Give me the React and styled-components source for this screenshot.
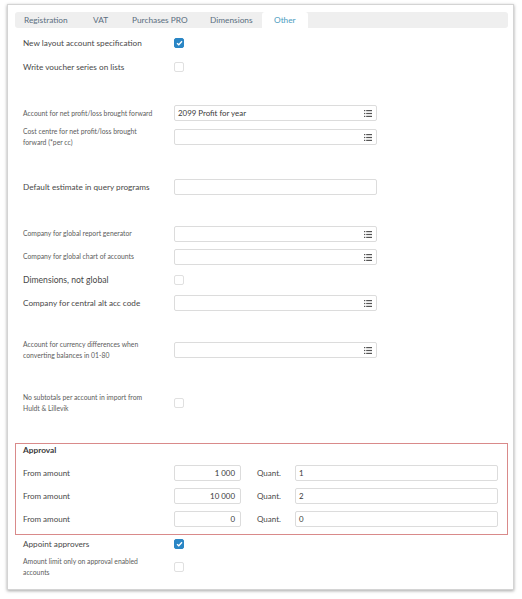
import React from "react";
import styled, { createGlobalStyle } from "styled-components";

const Global = createGlobalStyle`
  html, body { margin: 0; padding: 0; background: #ffffff; }
  body { font-family: "Lato", "Noto Sans", sans-serif; }
`;

const Page = styled.div`
  padding: 4px 8px 9px 7px;
`;

const Panel = styled.div`
  width: 507px;
  box-sizing: border-box;
  border: 1px solid #d4d4d4;
  box-shadow: 0 1px 3px rgba(0, 0, 0, 0.35);
  background: #fff;
  padding: 7px 5px 8px 7px;
`;

const TabBar = styled.div`
  display: flex;
  height: 16px;
  width: 493px;
  background: #efefef;
  border-radius: 3px;
  margin-bottom: 3px;
`;

const Tab = styled.div`
  width: ${(p) => p.$w}px;
  box-sizing: border-box;
  padding-left: ${(p) => p.$pl}px;
  font-size: 8.3px;
  line-height: 16px;
  color: ${(p) => (p.$active ? "#4c9cc0" : "#5a6e80")};
  background: ${(p) => (p.$active ? "#ffffff" : "transparent")};
  border-radius: ${(p) => (p.$active ? "3px 3px 0 0" : "0")};
  white-space: nowrap;
`;

const Row = styled.div`
  display: grid;
  grid-template-columns: 151px 1fr;
  align-items: center;
  height: ${(p) => p.$h || 23}px;
  padding-left: 8px;
`;

const Spacer = styled.div`
  height: ${(p) => p.$h}px;
`;

const Label = styled.div`
  font-size: ${(p) => (p.$small ? "6.8px" : p.$big ? "8.6px" : "8.2px")};
  line-height: ${(p) => (p.$small ? "11px" : "10px")};
  color: ${(p) => (p.$small ? "#5c5c5c" : "#484848")};
  padding-right: 18px;
`;

const Field = styled.div`
  position: relative;
  width: ${(p) => p.$w || 203}px;
  height: 16px;
  box-sizing: border-box;
  border: 1px solid #dcdcdc;
  border-radius: 2px;
  background: #fff;
  font-size: 7.9px;
  line-height: 14px;
  color: #3a3a3a;
  padding: 0 5px 0 3px;
  text-align: ${(p) => (p.$right ? "right" : "left")};
`;

const IconWrap = styled.span`
  position: absolute;
  right: 4px;
  top: 4px;
  width: 8px;
  height: 7px;
  display: flex;
`;

const Check = styled.div`
  width: 10px;
  height: 10px;
  box-sizing: border-box;
  border-radius: 2px;
  border: 1px solid ${(p) => (p.$on ? "#2a86c5" : "#e0e0e0")};
  background: ${(p) => (p.$on ? "#2a86c5" : "#fff")};
  display: flex;
  align-items: center;
  justify-content: center;
`;

const ApprovalBox = styled.div`
  width: 493px;
  box-sizing: border-box;
  border: 1px solid #d98a8a;
  padding: 1px 9px 4px 7px;
`;

const ApprovalTitle = styled.div`
  height: 16px;
  font-size: 8.3px;
  font-weight: 700;
  line-height: 10px;
  color: #3a3a3a;
`;

const AmountRow = styled.div`
  display: flex;
  align-items: center;
  height: 23px;
`;

const AmountLabel = styled.div`
  width: 151px;
  font-size: 8px;
  color: #484848;
`;

const QuantLabel = styled.div`
  width: 38px;
  margin-left: 16px;
  font-size: 8px;
  color: #484848;
`;

const ListIcon = () => (
  <IconWrap>
    <svg width="8" height="7" viewBox="0 0 8 7">
      <g fill="#555">
        <rect x="0" y="0" width="1.3" height="1.2" />
        <rect x="0" y="2.9" width="1.3" height="1.2" />
        <rect x="0" y="5.8" width="1.3" height="1.2" />
        <rect x="2.2" y="0" width="5.8" height="1.2" />
        <rect x="2.2" y="2.9" width="5.8" height="1.2" />
        <rect x="2.2" y="5.8" width="5.8" height="1.2" />
      </g>
    </svg>
  </IconWrap>
);

const CheckBox = ({ on }) => (
  <Check $on={on}>
    {on && (
      <svg width="7" height="6" viewBox="0 0 7 6">
        <path d="M1 3.2 L2.8 4.8 L6 1.2" stroke="#fff" strokeWidth="1.3" fill="none" />
      </svg>
    )}
  </Check>
);

const Select = ({ value }) => (
  <Field>
    {value}
    <ListIcon />
  </Field>
);

const tabs = [
  { t: "Registration", w: 66, pl: 9 },
  { t: "VAT", w: 40, pl: 12 },
  { t: "Purchases PRO", w: 78, pl: 11 },
  { t: "Dimensions", w: 63, pl: 11 },
  { t: "Other", w: 46, pl: 12, active: true },
];

const approvals = [
  { a: "1 000", q: "1" },
  { a: "10 000", q: "2" },
  { a: "0", q: "0" },
];

export default function App() {
  return (
    <>
      <Global />
      <Page>
        <Panel>
          <TabBar>
            {tabs.map((t) => (
              <Tab key={t.t} $w={t.w} $pl={t.pl} $active={t.active}>
                {t.t}
              </Tab>
            ))}
          </TabBar>

          <Row $h={24}>
            <Label>New layout account specification</Label>
            <CheckBox on />
          </Row>
          <Row $h={24}>
            <Label>Write voucher series on lists</Label>
            <CheckBox />
          </Row>
          <Spacer $h={22} />
          <Row $h={24}>
            <Label $small>Account for net profit/loss brought forward</Label>
            <Select value="2099 Profit for year" />
          </Row>
          <Row $h={24}>
            <Label $small>Cost centre for net profit/loss brought forward (*per cc)</Label>
            <Select />
          </Row>
          <Spacer $h={26} />
          <Row $h={24}>
            <Label>Default estimate in query programs</Label>
            <Field />
          </Row>
          <Spacer $h={23} />
          <Row>
            <Label $small>Company for global report generator</Label>
            <Select />
          </Row>
          <Row>
            <Label $small>Company for global chart of accounts</Label>
            <Select />
          </Row>
          <Row>
            <Label $big>Dimensions, not global</Label>
            <CheckBox />
          </Row>
          <Row>
            <Label>Company for central alt acc code</Label>
            <Select />
          </Row>
          <Spacer $h={24} />
          <Row>
            <Label $small>Account for currency differences when converting balances in 01-80</Label>
            <Select />
          </Row>
          <Spacer $h={30} />
          <Row>
            <Label $small>No subtotals per account in import from Huldt &amp; Lillevik</Label>
            <CheckBox />
          </Row>
          <Spacer $h={29} />
          <ApprovalBox>
            <ApprovalTitle>Approval</ApprovalTitle>
            {approvals.map((r, i) => (
              <AmountRow key={i}>
                <AmountLabel>From amount</AmountLabel>
                <Field $w={67} $right>
                  {r.a}
                </Field>
                <QuantLabel>Quant.</QuantLabel>
                <Field $w={203}>{r.q}</Field>
              </AmountRow>
            ))}
          </ApprovalBox>
          <Row $h={17}>
            <Label>Appoint approvers</Label>
            <CheckBox on />
          </Row>
          <Row $h={29}>
            <Label $small>Amount limit only on approval enabled accounts</Label>
            <CheckBox />
          </Row>
        </Panel>
      </Page>
    </>
  );
}
